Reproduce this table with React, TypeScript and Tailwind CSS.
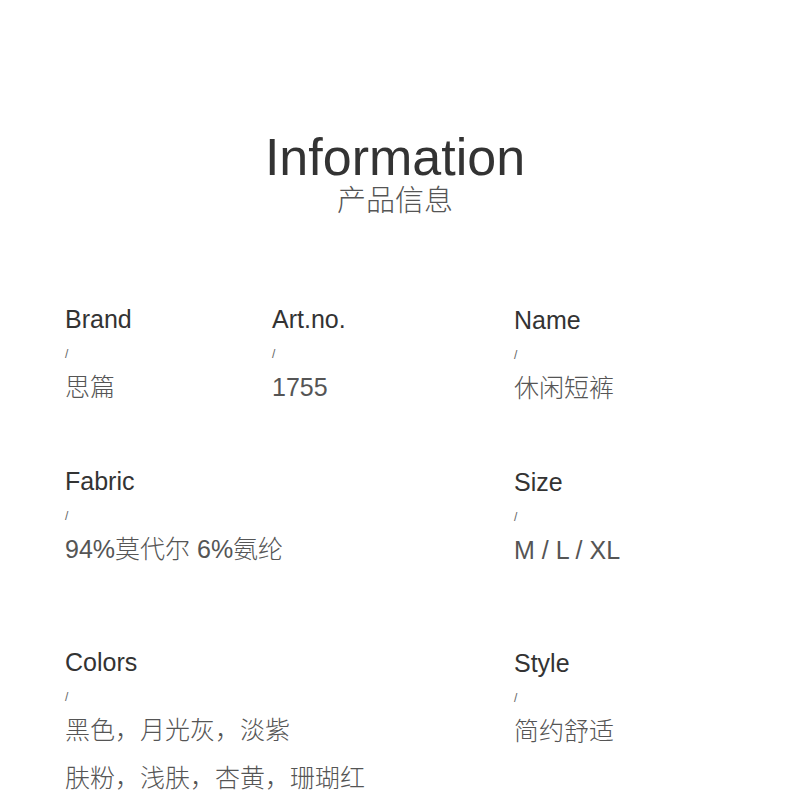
import React from "react";

const SANS = '"Liberation Sans", "Noto Sans CJK SC", sans-serif';
const CJK = '"Noto Sans CJK SC", "Liberation Sans", sans-serif';

function Cell({ label, values, className = "" }: { label: string; values: string[]; className?: string }) {
  return (
    <div className={"flex flex-col " + className}>
      <div className="h-[30px] text-[25px] leading-[30px] text-[#333] whitespace-nowrap">{label}</div>
      <div className="mt-[14px] h-[12px] text-[12px] leading-[12px] text-[#666]">/</div>
      <div className="mt-[12px] flex flex-col gap-[18px]">
        {values.map((v, i) => (
          <div key={i} className="h-[30px] text-[25px] leading-[30px] text-[#555] font-light whitespace-nowrap">
            {v}
          </div>
        ))}
      </div>
    </div>
  );
}

export default function App() {
  return (
    <div className="w-[790px] h-[804px] bg-white overflow-hidden" style={{ fontFamily: SANS }}>
      <div className="pt-[133px] flex flex-col items-center">
        <div className="h-[48px] text-[52px] leading-[48px] text-[#333]">Information</div>
        <div className="mt-[3px] h-[29px] text-[29px] leading-[29px] text-[#555] font-light" style={{ fontFamily: CJK }}>
          产品信息
        </div>
      </div>

      <div className="mt-[91px] pl-[65px] grid grid-cols-[207px_242px_1fr]">
        <Cell label="Brand" values={["思篇"]} />
        <Cell label="Art.no." values={["1755"]} />
        <Cell label="Name" values={["休闲短裤"]} className="mt-px" />
      </div>

      <div className="mt-[63px] pl-[65px] grid grid-cols-[449px_1fr]">
        <Cell label="Fabric" values={["94%莫代尔 6%氨纶"]} />
        <Cell label="Size" values={["M / L / XL"]} className="mt-px" />
      </div>

      <div className="mt-[82px] pl-[65px] grid grid-cols-[449px_1fr]">
        <Cell label="Colors" values={["黑色，月光灰，淡紫", "肤粉，浅肤，杏黄，珊瑚红"]} />
        <Cell label="Style" values={["简约舒适"]} className="mt-px" />
      </div>
    </div>
  );
}
